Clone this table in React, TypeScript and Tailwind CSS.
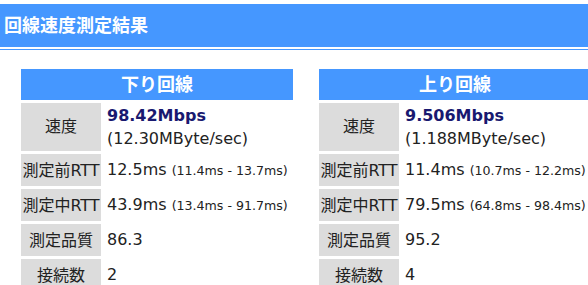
type Rtt = { avg: string; range: string };

interface LineResult {
    title: string;
    mbps: string;
    mbyte: string;
    before: Rtt;
    during: Rtt;
    quality: string;
    connections: string;
}

const results: LineResult[] = [
    {
        title: '下り回線',
        mbps: '98.42Mbps',
        mbyte: '(12.30MByte/sec)',
        before: { avg: '12.5ms', range: '(11.4ms - 13.7ms)' },
        during: { avg: '43.9ms', range: '(13.4ms - 91.7ms)' },
        quality: '86.3',
        connections: '2',
    },
    {
        title: '上り回線',
        mbps: '9.506Mbps',
        mbyte: '(1.188MByte/sec)',
        before: { avg: '11.4ms', range: '(10.7ms - 12.2ms)' },
        during: { avg: '79.5ms', range: '(64.8ms - 98.4ms)' },
        quality: '95.2',
        connections: '4',
    },
];

function Label({ children }: { children: React.ReactNode }) {
    return (
        <td className="h-[32px] p-0 bg-[#dcdcdc] text-center whitespace-nowrap text-[16px] leading-[23px]">
            {children}
        </td>
    );
}

function RttValue({ rtt }: { rtt: Rtt }) {
    return (
        <td className="pl-[3px] whitespace-nowrap">
            <span className="text-[16px]">{rtt.avg}</span>{' '}
            <span className="text-[12.6px]">{rtt.range}</span>
        </td>
    );
}

function ResultTable({ result }: { result: LineResult }) {
    return (
        <table className="table-fixed border-separate border-spacing-[3px] w-[278px] shrink-0">
            <colgroup>
                <col className="w-[80px]" />
                <col className="w-[189px]" />
            </colgroup>
            <thead>
                <tr>
                    <th
                        colSpan={2}
                        className="h-[31px] p-0 bg-[#4597ff] text-white text-[18px] font-bold leading-[31px] text-center"
                    >
                        {result.title}
                    </th>
                </tr>
            </thead>
            <tbody>
                <tr>
                    <td className="h-[48px] p-0 bg-[#dcdcdc] text-center text-[16px]">速度</td>
                    <td className="pl-[3px] pt-px align-top leading-[23px] whitespace-nowrap">
                        <div className="text-[16px] font-bold text-[#191970]">{result.mbps}</div>
                        <div className="text-[16px]">{result.mbyte}</div>
                    </td>
                </tr>
                <tr>
                    <Label>測定前RTT</Label>
                    <RttValue rtt={result.before} />
                </tr>
                <tr>
                    <Label>測定中RTT</Label>
                    <RttValue rtt={result.during} />
                </tr>
                <tr>
                    <Label>測定品質</Label>
                    <td className="pl-[3px] text-[16px]">{result.quality}</td>
                </tr>
                <tr>
                    <Label>接続数</Label>
                    <td className="pl-[3px] text-[16px]">{result.connections}</td>
                </tr>
            </tbody>
        </table>
    );
}

export default function App() {
    return (
        <div
            className="w-[588px] h-[285px] overflow-hidden bg-white text-[#222]"
            style={{ fontFamily: '"DejaVu Sans", "Noto Sans CJK JP", sans-serif' }}
        >
            <div className="mt-[4px] h-[43px] bg-[#4597ff] pl-[4px] flex items-center text-white text-[18px] font-bold">
                回線速度測定結果
            </div>
            <div className="mt-[2px] h-px bg-[#4597ff]" />
            <div className="flex gap-[20px] pl-[18px] pt-[16px]">
                {results.map((r) => (
                    <ResultTable key={r.title} result={r} />
                ))}
            </div>
        </div>
    );
}
